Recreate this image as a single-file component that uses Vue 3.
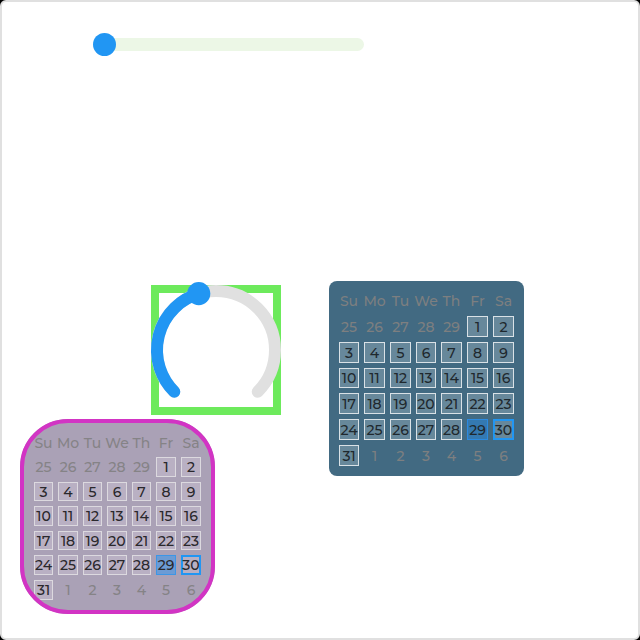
<script setup>
import { computed, ref } from 'vue'

const level = ref(0)
const sweep = ref(118)

const weekdays = ['Su', 'Mo', 'Tu', 'We', 'Th', 'Fr', 'Sa']

// Five leading days of the previous month, 31 days, six trailing days.
const days = [
  ...[25, 26, 27, 28, 29].map((n) => ({ n, outside: true })),
  ...Array.from({ length: 31 }, (_, i) => ({ n: i + 1, outside: false })),
  ...[1, 2, 3, 4, 5, 6].map((n) => ({ n, outside: true })),
]
const weeks = Array.from({ length: 6 }, (_, i) => days.slice(i * 7, i * 7 + 7))

const calendars = ['violet', 'steel']

function point(deg) {
  const a = (deg * Math.PI) / 180
  return { x: 65 + 59 * Math.cos(a), y: 65 + 59 * Math.sin(a) }
}
function arcPath(from, to) {
  const a = point(from)
  const b = point(to)
  return `M${a.x} ${a.y}A59 59 0 ${to - from > 180 ? 1 : 0} 1 ${b.x} ${b.y}`
}
const track = arcPath(135, 405)
const indicator = computed(() => arcPath(135, 135 + Number(sweep.value)))
const knob = computed(() => point(135 + Number(sweep.value)))
</script>

<template>
  <main class="screen">
    <div class="slider-row">
      <input v-model="level" class="slider" type="range" min="0" max="100" aria-label="Slider" />
    </div>
    <div class="widgets">
      <div v-for="theme in calendars" :key="theme" class="column" :class="'column-' + theme">
        <div v-if="theme === 'violet'" class="arc">
          <svg class="arc-drawing" viewBox="0 0 130 130" aria-hidden="true">
            <path class="arc-track" :d="track" />
            <path class="arc-indicator" :d="indicator" />
            <circle class="arc-knob" :cx="knob.x" :cy="knob.y" r="11.6" />
          </svg>
          <input v-model="sweep" class="arc-input" type="range" min="0" max="270" aria-label="Arc" />
        </div>
        <div class="calendar" :class="theme">
          <table class="days">
            <thead>
              <tr>
                <th v-for="w in weekdays" :key="w" scope="col">{{ w }}</th>
              </tr>
            </thead>
            <tbody>
              <tr v-for="(week, i) in weeks" :key="i">
                <td v-for="(day, j) in week" :key="j">
                  <button
                    type="button"
                    class="day"
                    :class="{ today: !day.outside && day.n === 29, marked: !day.outside && day.n === 30 }"
                    :disabled="day.outside"
                  >{{ day.n }}</button>
                </td>
              </tr>
            </tbody>
          </table>
        </div>
      </div>
    </div>
  </main>
</template>

<style>
html {
  background: #000;
}
</style>

<style scoped>
.screen {
  box-sizing: border-box;
  min-height: 100vh;
  border: 2px solid #e0e0e0;
  border-radius: 6px;
  background: #fff;
  padding: 31px 18px 24px;
  font-family: Montserrat, Inter, "Open Sans", sans-serif;
  font-size: 14px;
  font-weight: 500;
}

.slider-row {
  display: flex;
  padding-left: 73px;
}

.slider {
  appearance: none;
  width: 271px;
  height: 23px;
  margin: 0;
  background: transparent;
}

.slider::-webkit-slider-runnable-track {
  height: 13px;
  border-radius: 7px;
  background: #ecf7e6;
}

.slider::-webkit-slider-thumb {
  appearance: none;
  width: 23px;
  height: 23px;
  margin-top: -5px;
  border-radius: 50%;
  background: #2196f3;
}

.widgets {
  display: flex;
  align-items: flex-start;
  gap: 48px;
  margin-top: 225px;
}

.column {
  display: flex;
  flex-direction: column;
  gap: 4px;
}

.column-violet {
  padding-top: 4px;
}

.arc {
  display: grid;
  align-self: flex-end;
  box-sizing: border-box;
  width: 130px;
  height: 130px;
  margin-left: 131px;
  border: 8px solid #6dea5c;
}

.arc-drawing,
.arc-input {
  grid-area: 1 / 1;
  width: 130px;
  height: 130px;
  margin: -8px;
}

.arc-drawing {
  overflow: visible;
}

.arc-input {
  opacity: 0;
}

.arc-track,
.arc-indicator {
  fill: none;
  stroke-width: 12;
  stroke-linecap: round;
}

.arc-track {
  stroke: #e0e0e0;
}

.arc-indicator {
  stroke: #2196f3;
}

.arc-knob {
  fill: #2196f3;
}

.calendar {
  position: relative;
  box-sizing: border-box;
  width: 195px;
  height: 195px;
  padding: 10px;
}

.steel {
  --tracks: 20fr 21fr 21fr 20fr 21fr 21fr 21fr;
  --cell: #67889b;
  --line: #d9e1e6;
  --muted: #7d7f80;
  --ink: #1f282e;
  --today: #3479b1;
  --today-line: #2b8ae0;
  border-radius: 8px;
  background: #426a82;
}

.violet {
  --tracks: 19fr 20fr 19fr 20fr 19fr 20fr 20fr;
  --cell: #b9b0c3;
  --line: #dcd9df;
  --muted: #858386;
  --ink: #2a282c;
  --today: #6c9bd4;
  --today-line: #3c96e6;
  padding: 14px;
  border-radius: 48px;
  background: #aaa1b6;
}

/* The frame is painted over the day cells in the corners. */
.violet::after {
  content: "";
  position: absolute;
  inset: 0;
  border: 4px solid #d234c4;
  border-radius: 48px;
  pointer-events: none;
}

.days {
  display: grid;
  grid-template-columns: var(--tracks);
  grid-template-rows: var(--tracks);
  gap: 5px;
  height: 100%;
}

.days thead,
.days tbody,
.days tr {
  display: contents;
}

.days th,
.days td {
  display: flex;
  align-items: center;
  justify-content: center;
  min-width: 0;
  min-height: 0;
  padding: 0;
  color: var(--muted);
  font-weight: 500;
  line-height: 16px;
}

.day {
  display: flex;
  align-items: center;
  justify-content: center;
  box-sizing: border-box;
  width: 100%;
  height: 100%;
  padding: 0;
  border: 1px solid var(--line);
  border-radius: 0;
  background: var(--cell);
  color: var(--ink);
  font: inherit;
  line-height: 16px;
}

.day:disabled {
  border-color: transparent;
  background: transparent;
  color: var(--muted);
}

.day.today {
  border-color: var(--today-line);
  background: var(--today);
}

.day.marked {
  border: 2px solid #2196f3;
}
</style>
